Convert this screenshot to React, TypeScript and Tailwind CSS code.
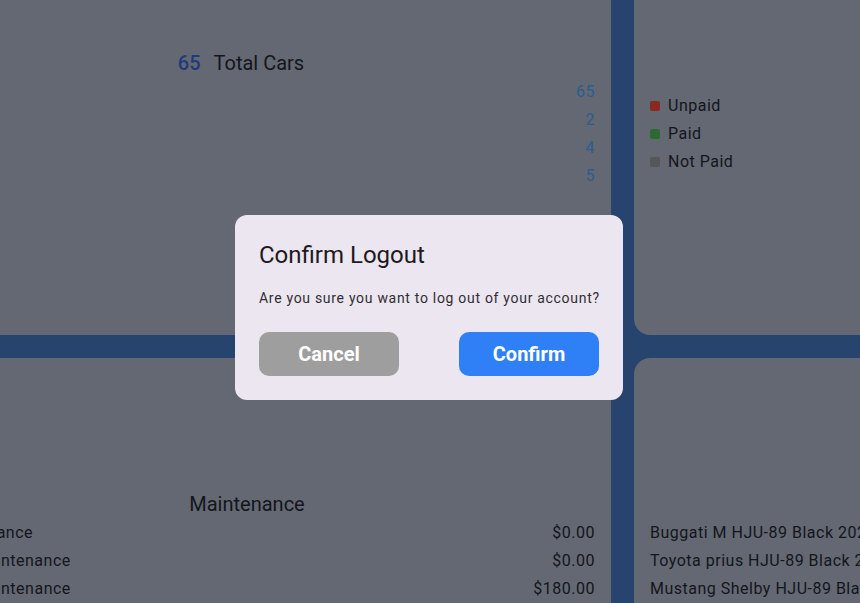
import { useState } from "react";

const counts = [65, 2, 4, 5];

const legend = [
  { label: "Unpaid", color: "bg-[#8a2822]" },
  { label: "Paid", color: "bg-[#2d6a31]" },
  { label: "Not Paid", color: "bg-[#555759]" },
];

const maintenance = [
  { name: "Vehicle Insurance", cost: "$0.00" },
  { name: "Quarterly Maintenance", cost: "$0.00" },
  { name: "Seasonal Maintenance", cost: "$180.00" },
];

const cars = [
  "Buggati M HJU-89 Black 2020",
  "Toyota prius HJU-89 Black 2019",
  "Mustang Shelby HJU-89 Black 2021",
];

function LogoutDialog({ onClose }: { onClose: () => void }) {
  return (
    <div className="absolute inset-0 flex items-center justify-center pt-[12px] pr-[2px]">
      <div className="w-[388px] rounded-xl bg-[#ece6f0] px-6 pt-6 pb-6">
        <h2 className="text-[24px] leading-8 text-[#1d1b20]">Confirm Logout</h2>
        <p className="mt-[17px] whitespace-nowrap text-[14px] leading-5 tracking-[0.7px] text-[#302e33]">
          Are you sure you want to log out of your account?
        </p>
        <div className="mt-6 flex justify-between">
          <button
            onClick={onClose}
            className="h-11 w-[140px] rounded-[10px] bg-[#9e9e9e] text-[20px] font-bold text-white"
          >
            Cancel
          </button>
          <button
            onClick={onClose}
            className="h-11 w-[140px] rounded-[10px] bg-[#2f80f6] text-[20px] font-bold text-white"
          >
            Confirm
          </button>
        </div>
      </div>
    </div>
  );
}

export default function App() {
  const [open, setOpen] = useState(true);

  return (
    <div
      className="relative h-[603px] w-[860px] overflow-hidden bg-[#27446f] text-[#14161c]"
      style={{ fontFamily: "Roboto, 'Noto Sans', sans-serif" }}
    >
      <div className="-mt-[40px] -ml-[117px] grid grid-cols-[728px_400px] grid-rows-[375px_400px] gap-[23px]">
        {/* fleet summary */}
        <div className="rounded-2xl bg-[#636872] px-4 pt-[89px]">
          <div className="flex items-center justify-center gap-[13px] pr-3 text-[20px] leading-7">
            <span className="font-medium text-[#1f3b7e]">65</span>
            <span>Total Cars</span>
          </div>
          <div className="mt-px flex flex-col items-end text-[16px] leading-7 tracking-[0.5px] text-[#2a5d91]">
            {counts.map((n, i) => (
              <span key={i}>{n}</span>
            ))}
          </div>
        </div>

        {/* payment status */}
        <div className="rounded-2xl bg-[#636872] px-4 pt-[132px]">
          {legend.map((l) => (
            <div key={l.label} className="flex h-7 items-center gap-2 text-[16px] tracking-[0.5px]">
              <span className={`h-2.5 w-2.5 rounded-[2px] ${l.color}`} />
              <span>{l.label}</span>
            </div>
          ))}
        </div>

        {/* maintenance */}
        <div className="rounded-2xl bg-[#636872] px-4 pt-[132px]">
          <h3 className="text-center text-[20px] leading-7">Maintenance</h3>
          <div className="mt-px">
            {maintenance.map((m) => (
              <div
                key={m.name}
                className="flex h-7 items-center justify-between whitespace-nowrap text-[16px] tracking-[0.5px]"
              >
                <span>{m.name}</span>
                <span>{m.cost}</span>
              </div>
            ))}
          </div>
        </div>

        {/* cars */}
        <div className="rounded-2xl bg-[#636872] px-4 pt-[161px]">
          {cars.map((c) => (
            <div key={c} className="flex h-7 items-center whitespace-nowrap text-[16px] tracking-[0.5px]">
              {c}
            </div>
          ))}
        </div>
      </div>

      {open && <LogoutDialog onClose={() => setOpen(false)} />}
    </div>
  );
}
